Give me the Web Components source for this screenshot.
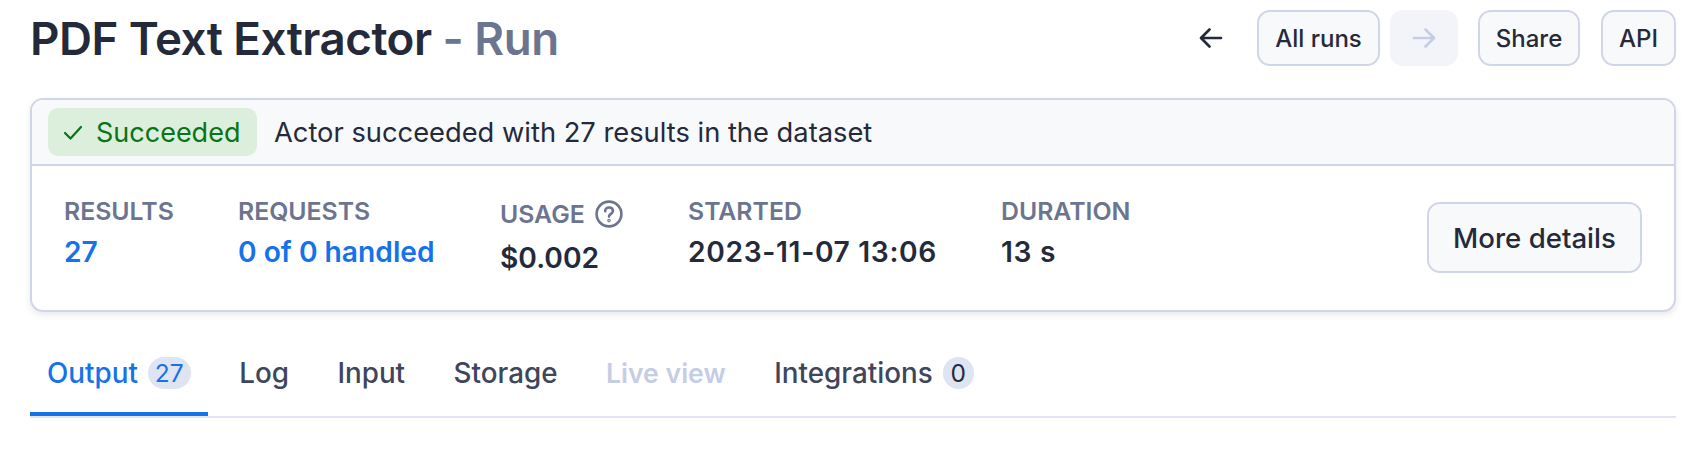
<!DOCTYPE html>
<html>
<head>
<meta charset="utf-8">
<title>PDF Text Extractor - Run</title>
<style>
  html, body { margin: 0; background: #fff; }
  body { font-family: Inter, "Noto Sans", sans-serif; color: #252a3a; overflow: hidden; }
</style>
</head>
<body>
<run-page>
  <run-header slot="header">
    <span slot="title">PDF Text Extractor</span>
    <span slot="subtitle">- Run</span>
  </run-header>
  <run-card>
    <stat-item label="RESULTS" value="27" link style="width:174px"></stat-item>
    <stat-item label="REQUESTS" value="0 of 0 handled" link style="width:262px"></stat-item>
    <stat-item label="USAGE" value="$0.002" help style="width:188px"></stat-item>
    <stat-item label="STARTED" value="2023-11-07 13:06" style="width:313px"></stat-item>
    <stat-item label="DURATION" value="13 s"></stat-item>
  </run-card>
  <tab-bar>
    <tab-item active count="27">Output</tab-item>
    <tab-item>Log</tab-item>
    <tab-item>Input</tab-item>
    <tab-item>Storage</tab-item>
    <tab-item disabled>Live view</tab-item>
    <tab-item count="0">Integrations</tab-item>
  </tab-bar>
</run-page>

<script>
(function () {
  const arrowLeft = `<svg width="26" height="26" viewBox="0 0 26 26" fill="none" stroke="currentColor" stroke-width="2.7" stroke-linecap="round" stroke-linejoin="round"><path d="M23 13H3.5M11.5 4.5 3 13l8.5 8.5"/></svg>`;
  const arrowRight = `<svg width="26" height="26" viewBox="0 0 26 26" fill="none" stroke="currentColor" stroke-width="2.7" stroke-linecap="round" stroke-linejoin="round"><path d="M3 13h19.5M14.5 4.5 23 13l-8.5 8.5"/></svg>`;

  customElements.define(
    "run-page",
    class RunPage extends HTMLElement {
      constructor() {
        super();
        this.attachShadow({ mode: "open" }).innerHTML = `
          <style>
            :host { display: block; width: 1646px; padding: 10px 30px 0; }
          </style>
          <slot name="header"></slot>
          <slot></slot>`;
      }
    }
  );

  customElements.define(
    "action-button",
    class ActionButton extends HTMLElement {
      constructor() {
        super();
        this.attachShadow({ mode: "open" }).innerHTML = `
          <style>
            :host {
              display: inline-flex;
              align-items: center;
              justify-content: center;
              box-sizing: border-box;
              height: 56px;
              border: 2px solid #d0d5e8;
              border-radius: 13px;
              background: #f8f9fb;
              font-size: 24px;
              font-weight: 500;
              color: #252a3a;
            }
            :host([ghost]) { background: none; border-color: transparent; }
            :host([disabled]) { background: #f3f4f9; border-color: transparent; color: #c5cde6; }
          </style>
          <slot></slot>`;
      }
    }
  );

  customElements.define(
    "run-header",
    class RunHeader extends HTMLElement {
      constructor() {
        super();
        this.attachShadow({ mode: "open" }).innerHTML = `
          <style>
            :host { display: flex; align-items: center; justify-content: space-between; height: 56px; }
            h1 { margin: 2px 0 0; font-size: 45.7px; font-weight: 600; line-height: 54px; letter-spacing: -0.5px; color: #252a3a; white-space: nowrap; }
            .sub { color: #6c7590; }
            nav { display: flex; align-items: center; }
            .back { width: 58px; margin-right: 17px; }
            .next { width: 68px; margin: 0 20px 0 10px; }
            .runs { width: 123px; }
            .share { width: 102px; margin-right: 21px; }
            .api { width: 75px; }
          </style>
          <h1><slot name="title"></slot> <span class="sub"><slot name="subtitle"></slot></span></h1>
          <nav>
            <action-button class="back" ghost>${arrowLeft}</action-button>
            <action-button class="runs">All runs</action-button>
            <action-button class="next" disabled>${arrowRight}</action-button>
            <action-button class="share">Share</action-button>
            <action-button class="api">API</action-button>
          </nav>`;
      }
    }
  );

  customElements.define(
    "stat-item",
    class StatItem extends HTMLElement {
      constructor() {
        super();
        this.attachShadow({ mode: "open" }).innerHTML = `
          <style>
            :host { display: block; flex: none; }
            .label { display: flex; align-items: center; gap: 10px; height: 28px; font-size: 24.8px; font-weight: 600; color: #6c7590; white-space: nowrap; }
            .label svg { flex: none; }
            .value { margin-top: 10px; font-size: 28.2px; line-height: 34px; font-weight: 600; color: #252a3a; white-space: nowrap; }
            .link { color: #1672eb; }
            .helped .label { margin-top: 3px; }
            .helped .value { margin-top: 13px; }
            .wide { letter-spacing: 0.65px; }
          </style>
          <div class="wrap">
            <div class="label"><span id="label"></span></div>
            <div class="value" id="value"></div>
          </div>`;
      }

      connectedCallback() {
        const root = this.shadowRoot;
        root.getElementById("label").textContent = this.getAttribute("label");
        const value = root.getElementById("value");
        value.textContent = this.getAttribute("value");
        if (this.hasAttribute("link")) value.classList.add("link");
        else if (!this.hasAttribute("help")) value.classList.add("wide");
        if (this.hasAttribute("help")) {
          root.querySelector(".wrap").classList.add("helped");
          root.querySelector(".label").insertAdjacentHTML(
            "beforeend",
            `<svg width="28" height="28" viewBox="0 0 28 28" fill="none" stroke="#6c7590" stroke-width="2.6" stroke-linecap="round"><circle cx="14" cy="14" r="12.4"/><path d="M10.2 11.2c0-2.2 1.7-3.7 3.9-3.7s3.8 1.4 3.8 3.4c0 3-3.9 3-3.9 5.7"/><circle cx="14" cy="20.6" r=".5" fill="#6c7590"/></svg>`
          );
        }
      }
    }
  );

  customElements.define(
    "run-card",
    class RunCard extends HTMLElement {
      constructor() {
        super();
        this.attachShadow({ mode: "open" }).innerHTML = `
          <style>
            :host {
              display: block;
              box-sizing: border-box;
              height: 214px;
              margin-top: 32px;
              border: 2px solid #d0d5e8;
              border-radius: 13px;
              background: #fff;
              box-shadow: 0 3px 6px rgba(37, 42, 58, 0.1);
              overflow: hidden;
            }
            .status {
              display: flex;
              align-items: center;
              box-sizing: border-box;
              height: 66px;
              padding: 0 16px;
              background: #f8f9fb;
              border-bottom: 2px solid #d0d5e8;
            }
            .badge {
              display: flex;
              align-items: center;
              gap: 13px;
              box-sizing: border-box;
              width: 209px;
              height: 48px;
              padding-left: 15px;
              border-radius: 10px;
              background: #dbefdc;
              color: #0a7315;
              font-size: 27px;
            }
            .msg { margin-left: 17px; font-size: 27.3px; color: #252a3a; }
            .stats { display: flex; align-items: flex-start; padding: 31px 32px 0 32px; }
            action-button.more { width: 215px; height: 71px; font-size: 27.6px; margin: 5px 0 0 auto; }
          </style>
          <div class="status">
            <div class="badge">
              <svg width="20" height="20" viewBox="0 0 20 20" fill="none" stroke="currentColor" stroke-width="2.2" stroke-linecap="round" stroke-linejoin="round"><path d="M2 11l5.5 5.5L18 5"/></svg>
              <span>Succeeded</span>
            </div>
            <div class="msg">Actor succeeded with 27 results in the dataset</div>
          </div>
          <div class="stats">
            <slot></slot>
            <action-button class="more">More details</action-button>
          </div>`;
      }
    }
  );

  customElements.define(
    "tab-item",
    class TabItem extends HTMLElement {
      constructor() {
        super();
        this.attachShadow({ mode: "open" }).innerHTML = `
          <style>
            :host {
              display: flex;
              align-items: center;
              gap: 10px;
              box-sizing: border-box;
              height: 70px;
              padding: 0 17px 13px;
              margin-right: 14.5px;
              border-bottom: 4px solid transparent;
              font-size: 27.8px;
              font-weight: 500;
              color: #3e465c;
              white-space: nowrap;
            }
            :host([active]) { color: #1672eb; border-bottom-color: #1672eb; }
            :host([disabled]) { color: #c5cde6; font-size: 26.6px; font-weight: 600; }
            .count {
              display: flex;
              align-items: center;
              justify-content: center;
              box-sizing: border-box;
              min-width: 31px;
              height: 32px;
              padding: 0 7px;
              border-radius: 16px;
              background: #dfe4f3;
              font-size: 24.5px;
              font-weight: 400;
              color: #252a3a;
            }
            :host([active]) .count { color: #1672eb; }
          </style>
          <slot></slot>
          <span class="count" id="count"></span>`;
      }

      connectedCallback() {
        const count = this.shadowRoot.getElementById("count");
        if (this.hasAttribute("count")) {
          count.textContent = this.getAttribute("count");
        } else {
          count.remove();
        }
      }
    }
  );

  customElements.define(
    "tab-bar",
    class TabBar extends HTMLElement {
      constructor() {
        super();
        this.attachShadow({ mode: "open" }).innerHTML = `
          <style>
            :host {
              display: flex;
              margin-top: 34px;
              border-bottom: 2px solid #e0e4f5;
            }
          </style>
          <slot></slot>`;
      }
    }
  );
})();
</script>
</body>
</html>
